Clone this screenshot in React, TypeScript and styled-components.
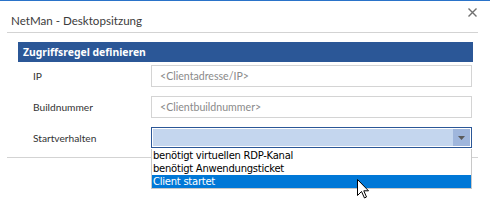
import React from 'react';
import styled, { createGlobalStyle } from 'styled-components';

const GlobalStyle = createGlobalStyle`
  html, body {
    margin: 0;
    padding: 0;
    background: #ffffff;
  }
  body {
    font-family: Lato, "Noto Sans", sans-serif;
  }
`;

const Window = styled.div`
  position: relative;
  width: 490px;
  height: 207px;
  box-sizing: border-box;
  border-top: 1px solid #2a73c9;
  background: #ffffff;
  overflow: hidden;
`;

const TitleBar = styled.div`
  display: flex;
  align-items: center;
  justify-content: space-between;
  height: 31px;
  padding: 0 13px 0 11px;
`;

const Title = styled.div`
  font-size: 11.6px;
  color: #3c3c3c;
  padding-top: 7px;
`;

const CloseButton = styled.div`
  width: 10px;
  height: 10px;
  margin-top: -8px;
  display: flex;
  align-items: center;
  justify-content: center;
`;

const Separator = styled.div`
  height: 1px;
  background: #d3d3d3;
  margin: 0 12px 0 7px;
`;

const Content = styled.div`
  padding: 9px 17px 0 18px;
`;

const SectionHeader = styled.div`
  height: 20px;
  background: #2b5797;
  color: #ffffff;
  font-family: "Noto Sans", sans-serif;
  font-weight: bold;
  font-size: 10.4px;
  line-height: 20px;
  padding-left: 5px;
`;

const Rows = styled.div`
  display: flex;
  flex-direction: column;
  gap: 9px;
  padding-top: 3px;
`;

const Row = styled.div`
  display: grid;
  grid-template-columns: 133px 321px;
  align-items: center;
  position: relative;
`;

const Label = styled.div`
  font-size: 10.2px;
  color: #333333;
  padding-left: 15px;
`;

const TextBox = styled.div`
  box-sizing: border-box;
  height: 22px;
  border: 1px solid #d4d4d4;
  font-size: 10.6px;
  color: #8a8a8a;
  line-height: 20px;
  padding-left: 8px;
`;

const Combo = styled.div`
  box-sizing: border-box;
  height: 21px;
  border: 1px solid #2b5797;
  padding: 1px;
  display: flex;
  background: #ffffff;
`;

const ComboField = styled.div`
  flex: 1;
  background: #c4d6ee;
`;

const ComboButton = styled.div`
  width: 17px;
  background: #9fb6dc;
  display: flex;
  align-items: center;
  justify-content: center;
`;

const BottomSeparator = styled(Separator)`
  margin-top: 9px;
`;

const DropList = styled.div`
  position: absolute;
  left: 151px;
  top: 148px;
  width: 321px;
  box-sizing: border-box;
  border: 1px solid #c8c8c8;
  border-top: none;
  background: #ffffff;
`;

const DropItem = styled.div<{ $selected?: boolean }>`
  height: 13px;
  line-height: 13px;
  font-family: "DejaVu Sans", sans-serif;
  font-size: 10px;
  letter-spacing: -0.25px;
  padding-left: 1px;
  color: ${p => (p.$selected ? '#ffffff' : '#000000')};
  background: ${p => (p.$selected ? '#0078d7' : 'transparent')};
`;

const Cursor = styled.svg`
  position: absolute;
  left: 357px;
  top: 178px;
`;

const items = ['benötigt virtuellen RDP-Kanal', 'benötigt Anwendungsticket', 'Client startet'];

export default function App() {
  return (
    <>
      <GlobalStyle />
      <Window>
        <TitleBar>
          <Title>NetMan - Desktopsitzung</Title>
          <CloseButton>
            <svg width="9" height="9" viewBox="0 0 9 9">
              <path d="M0.5 0.5 L8.5 8.5 M8.5 0.5 L0.5 8.5" stroke="#707070" strokeWidth="1.4" />
            </svg>
          </CloseButton>
        </TitleBar>
        <Separator />
        <Content>
          <SectionHeader>Zugriffsregel definieren</SectionHeader>
          <Rows>
            <Row>
              <Label>IP</Label>
              <TextBox>&lt;Clientadresse/IP&gt;</TextBox>
            </Row>
            <Row>
              <Label>Buildnummer</Label>
              <TextBox>&lt;Clientbuildnummer&gt;</TextBox>
            </Row>
            <Row>
              <Label>Startverhalten</Label>
              <Combo>
                <ComboField />
                <ComboButton>
                  <svg width="7" height="4" viewBox="0 0 7 4">
                    <path d="M0 0 L7 0 L3.5 4 Z" fill="#5a5a5a" />
                  </svg>
                </ComboButton>
              </Combo>
            </Row>
          </Rows>
        </Content>
        <BottomSeparator />
        <DropList>
          {items.map((t, i) => (
            <DropItem key={t} $selected={i === 2}>{t}</DropItem>
          ))}
        </DropList>
        <Cursor width="13" height="21" viewBox="0 0 13 21">
          <path
            d="M0.5 0.5 L0.5 16.5 L4.5 12.5 L7.5 19 L9.5 18 L6.8 11.8 L11.5 11.8 Z"
            fill="#ffffff"
            stroke="#000000"
            strokeWidth="1"
          />
        </Cursor>
      </Window>
    </>
  );
}
